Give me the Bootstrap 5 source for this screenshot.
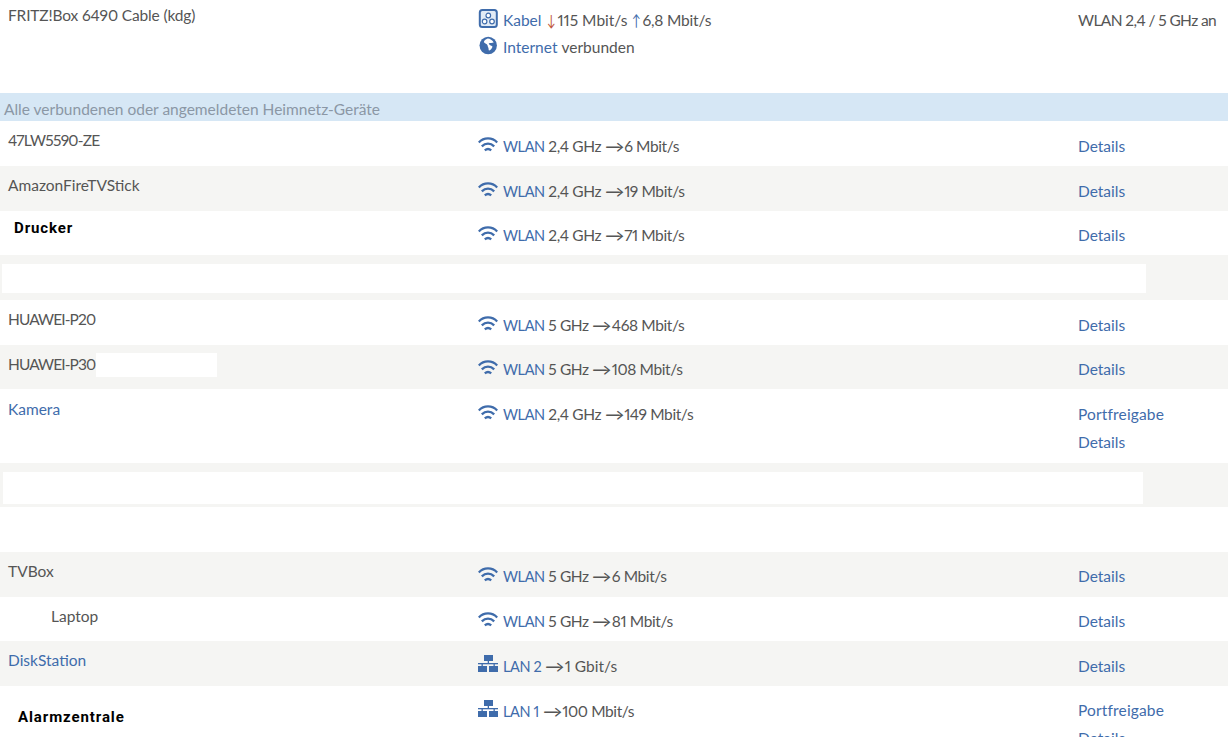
<!DOCTYPE html>
<html lang="de">
<head>
<meta charset="utf-8">
<title>Heimnetz</title>
<link href="https://cdn.jsdelivr.net/npm/bootstrap@5.3.0/dist/css/bootstrap.min.css" rel="stylesheet">
<style>
html,body{height:737px;overflow:hidden;background:#fff}
body{font-family:Lato,"Noto Sans",sans-serif;font-size:15.5px;color:#555;line-height:20px;font-variant-numeric:proportional-nums}
a{color:#3f6cab;text-decoration:none}
.net-row{display:flex;background:#fff;height:45px}
.net-row.alt{background:#f5f5f3}
.h44{height:44px}.h74{height:74px}.h93{height:93px}
.c-name{width:471px;padding:9px 0 0 8px;position:relative;flex:none}
.c-conn{width:599px;padding:15px 0 0 7px;flex:none}
.c-act{padding:15px 0 0 8px;flex:1 1 auto;white-space:nowrap}
.up1 .c-conn,.up1 .c-act,.c-act.act-up{padding-top:14px}
.top-row .c-name{padding-top:5px;letter-spacing:-.15px}
.top-row .c-conn,.top-row .c-act{padding-top:10px}
.top-row .c-act{letter-spacing:-.6px}
.line{display:flex;align-items:center;height:20px;white-space:pre}
.line svg{flex:none;margin-right:5px;width:20px;height:19px;margin-top:-4px;color:#3f6cab}
.line+.line{margin-top:7px}
.act-gap{margin-top:8px}
.capname{font-size:14.5px;letter-spacing:-.4px}
.val{letter-spacing:-.4px}
.val6{letter-spacing:-.2px}
.to{display:inline-block;transform:scaleX(1.25);margin:0 2px;letter-spacing:0}
.sec-head{background:#d6e7f5;color:#8b97a5;height:28px;padding:6px 0 0 4px}
.strong-name{font-family:Roboto,sans-serif;font-weight:700;font-size:15px;color:#000;letter-spacing:.9px}
.pad10{padding-top:10px}
.ind1{padding-left:14px;padding-top:6px}
.ind2{padding-left:51px}
.ind3{padding-left:18px;padding-top:20px}
.tight5{letter-spacing:-.9px}
.tight7{letter-spacing:-.75px}
.pf{letter-spacing:.15px}
.mask{background:#fff;flex:none}
.m1{width:1144px;height:29px;margin:9px 0 0 2px}
.m2{width:1140px;height:32px;margin:9px 0 0 3px}
.m3{position:absolute;left:96px;top:8px;width:121px;height:24px}
.arr,.up{display:inline-block;width:7px;text-align:center;transform:scaleX(.75);margin:0 4px 0 5px;letter-spacing:0}
.arr{color:#c0563a}
.up{color:#3f6cab;margin:0 4px 0 4px}
.gap-i{margin-left:4px}
</style>
</head>
<body>
<svg width="0" height="0" class="d-block">
<defs>
<symbol id="wifi" viewBox="0 0 20 19"><g fill="none" stroke="currentColor" stroke-width="2.300"><path d="M.8 7.500C5.800 2 14.200 2 19.200 7.500"/><path d="M3.800 11.400C7.500 7.700 12.500 7.700 16.200 11.400"/><path d="M6.800 15.400C8.800 13.600 11.200 13.600 13.200 15.400"/></g></symbol>
<symbol id="lan" viewBox="0 0 20 19"><g fill="currentColor"><rect x="6" y="0" width="9" height="6"/><rect x="0" y="11" width="9" height="6"/><rect x="11" y="11" width="9" height="6"/><rect x="9.700" y="6" width="1.300" height="3"/><rect x="0" y="8" width="20" height="1.300"/><rect x="3.500" y="8" width="1.300" height="3"/><rect x="15.500" y="8" width="1.300" height="3"/></g></symbol>
<symbol id="box" viewBox="0 0 20 19"><rect x="1.800" y="1" width="17" height="17" rx="2.500" fill="#e2ebf5" stroke="currentColor" stroke-width="2"/><g fill="#fff" stroke="currentColor" stroke-width="1.200"><circle cx="10.300" cy="6.500" r="2.300"/><circle cx="6.600" cy="12.500" r="2.300"/><circle cx="14" cy="12.500" r="2.300"/></g></symbol>
<symbol id="globe" viewBox="0 0 20 19"><circle cx="10.200" cy="9.500" r="8.700" fill="currentColor"/><path d="M9.700 2.500C7.700 3.200 5.700 4.800 5.900 6.300 6.900 7.800 9 7.500 9.500 9.200 9.700 10.800 10.900 12 10.700 14.300 12.200 15 14.200 12.500 14.500 10.500 13 9.500 11.200 9 10.700 7.500 12.200 6.800 14.200 7 15.700 6.500 14.200 4 12.200 2.700 9.700 2.500Z" fill="#fff"/></symbol>
</defs>
</svg>

<main>
<div class="net-row h93 top-row">
  <div class="c-name">FRITZ!Box 6490 Cable (kdg)</div>
  <div class="c-conn">
    <div class="line"><svg><use href="#box"/></svg><span><a href="#">Kabel</a><span class="arr">↓</span><span>115 Mbit/s</span><span class="up">↑</span><span class="val6">6,8 Mbit/s</span></span></div>
    <div class="line"><svg><use href="#globe"/></svg><span><a href="#">Internet</a><span class="gap-i">verbunden</span></span></div>
  </div>
  <div class="c-act">WLAN 2,4 / 5 GHz an</div>
</div>

<div class="sec-head">Alle verbundenen oder angemeldeten Heimnetz-Geräte</div>

<div class="net-row"><div class="c-name tight7">47LW5590-ZE</div><div class="c-conn"><div class="line"><svg><use href="#wifi"/></svg><span><a href="#" class="capname">WLAN</a><span class="val"> 2,4 GHz </span><span class="to">→</span><span class="val">6 Mbit/s</span></span></div></div><div class="c-act"><a href="#">Details</a></div></div>
<div class="net-row alt"><div class="c-name">AmazonFireTVStick</div><div class="c-conn"><div class="line"><svg><use href="#wifi"/></svg><span><a href="#" class="capname">WLAN</a><span class="val"> 2,4 GHz </span><span class="to">→</span><span class="val">19 Mbit/s</span></span></div></div><div class="c-act"><a href="#">Details</a></div></div>
<div class="net-row h44 up1"><div class="c-name ind1"><span class="strong-name">Drucker</span></div><div class="c-conn"><div class="line"><svg><use href="#wifi"/></svg><span><a href="#" class="capname">WLAN</a><span class="val"> 2,4 GHz </span><span class="to">→</span><span class="val">71 Mbit/s</span></span></div></div><div class="c-act"><a href="#">Details</a></div></div>
<div class="net-row alt"><div class="mask m1"></div></div>
<div class="net-row"><div class="c-name tight5">HUAWEI-P20</div><div class="c-conn"><div class="line"><svg><use href="#wifi"/></svg><span><a href="#" class="capname">WLAN</a><span class="val"> 5 GHz </span><span class="to">→</span><span class="val">468 Mbit/s</span></span></div></div><div class="c-act"><a href="#">Details</a></div></div>
<div class="net-row alt h44 up1"><div class="c-name tight5">HUAWEI-P30<div class="mask m3"></div></div><div class="c-conn"><div class="line"><svg><use href="#wifi"/></svg><span><a href="#" class="capname">WLAN</a><span class="val"> 5 GHz </span><span class="to">→</span><span class="val">108 Mbit/s</span></span></div></div><div class="c-act"><a href="#">Details</a></div></div>
<div class="net-row h74"><div class="c-name pad10"><a href="#">Kamera</a></div><div class="c-conn"><div class="line"><svg><use href="#wifi"/></svg><span><a href="#" class="capname">WLAN</a><span class="val"> 2,4 GHz </span><span class="to">→</span><span class="val">149 Mbit/s</span></span></div></div><div class="c-act"><div><a href="#" class="pf">Portfreigabe</a></div><div class="act-gap"><a href="#">Details</a></div></div></div>
<div class="net-row alt h44"><div class="mask m2"></div></div>
<div class="net-row"></div>
<div class="net-row alt up1"><div class="c-name">TVBox</div><div class="c-conn"><div class="line"><svg><use href="#wifi"/></svg><span><a href="#" class="capname">WLAN</a><span class="val"> 5 GHz </span><span class="to">→</span><span class="val">6 Mbit/s</span></span></div></div><div class="c-act"><a href="#">Details</a></div></div>
<div class="net-row h44 up1"><div class="c-name ind2">Laptop</div><div class="c-conn"><div class="line"><svg><use href="#wifi"/></svg><span><a href="#" class="capname">WLAN</a><span class="val"> 5 GHz </span><span class="to">→</span><span class="val">81 Mbit/s</span></span></div></div><div class="c-act"><a href="#">Details</a></div></div>
<div class="net-row alt"><div class="c-name"><a href="#">DiskStation</a></div><div class="c-conn"><div class="line"><svg><use href="#lan"/></svg><span><a href="#" class="capname">LAN 2</a><span> </span><span class="to">→</span><span>1 Gbit/s</span></span></div></div><div class="c-act"><a href="#">Details</a></div></div>
<div class="net-row h74"><div class="c-name ind3"><span class="strong-name">Alarmzentrale</span></div><div class="c-conn"><div class="line"><svg><use href="#lan"/></svg><span><a href="#" class="capname">LAN 1</a><span> </span><span class="to">→</span><span class="val">100 Mbit/s</span></span></div></div><div class="c-act act-up"><div><a href="#" class="pf">Portfreigabe</a></div><div class="act-gap"><a href="#">Details</a></div></div></div>
</main>
</body>
</html>
